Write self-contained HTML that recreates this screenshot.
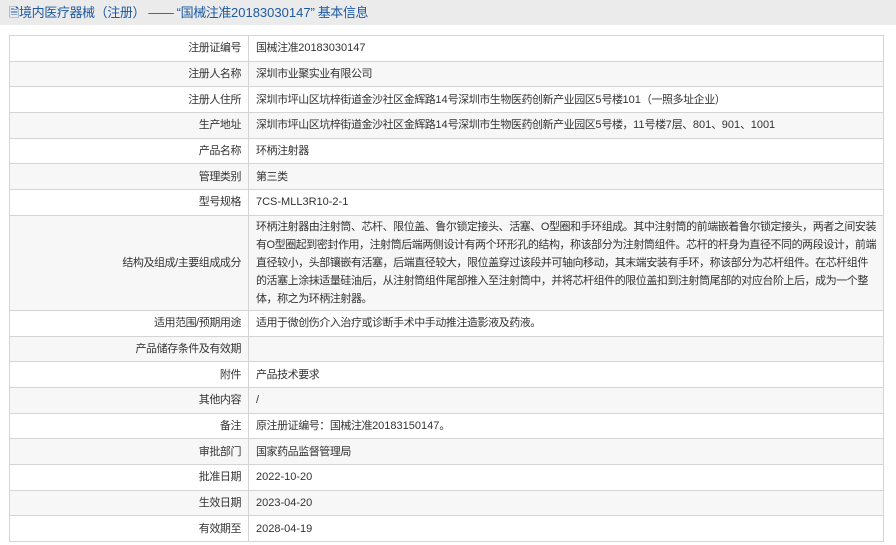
<!DOCTYPE html><html><head><meta charset="utf-8"><style>
body{margin:0;background:#fff;font-family:"Liberation Sans","Noto Sans CJK SC",sans-serif;width:896px;height:545px;overflow:hidden}
.hd{height:25px;background:#ebebeb;color:#1e5aa0;font-size:13px;line-height:25px;padding-left:9px;letter-spacing:-0.4px}
table{position:absolute;left:9px;top:35px;width:875px;border-collapse:collapse;font-size:11px;color:#333;letter-spacing:-0.45px}
td{border:1px solid #d4d4d4;height:24.7px;padding:0 7px;line-height:18px}
td.l{width:224px;text-align:right}
tr:nth-child(even) td{background:#f7f7f7}
i{font-style:normal;letter-spacing:0}
</style></head><body>
<div class="hd">🗎境内医疗器械（注册） —— “国械注准<i>20183030147</i>” 基本信息</div>
<table>
<tr><td class="l">注册证编号</td><td>国械注准<i>20183030147</i></td></tr>
<tr><td class="l">注册人名称</td><td>深圳市业聚实业有限公司</td></tr>
<tr><td class="l">注册人住所</td><td>深圳市坪山区坑梓街道金沙社区金辉路<i>14</i>号深圳市生物医药创新产业园区<i>5</i>号楼<i>101</i>（一照多址企业）</td></tr>
<tr><td class="l">生产地址</td><td>深圳市坪山区坑梓街道金沙社区金辉路<i>14</i>号深圳市生物医药创新产业园区<i>5</i>号楼，<i>11</i>号楼<i>7</i>层、<i>801</i>、<i>901</i>、<i>1001</i></td></tr>
<tr><td class="l">产品名称</td><td>环柄注射器</td></tr>
<tr><td class="l">管理类别</td><td>第三类</td></tr>
<tr><td class="l">型号规格</td><td><i>7CS-MLL3R10-2-1</i></td></tr>
<tr><td class="l" style="height:94px">结构及组成/主要组成成分</td><td>环柄注射器由注射筒、芯杆、限位盖、鲁尔锁定接头、活塞、O型圈和手环组成。其中注射筒的前端嵌着鲁尔锁定接头，两者之间安装有O型圈起到密封作用，注射筒后端两侧设计有两个环形孔的结构，称该部分为注射筒组件。芯杆的杆身为直径不同的两段设计，前端直径较小，头部镶嵌有活塞，后端直径较大，限位盖穿过该段并可轴向移动，其末端安装有手环，称该部分为芯杆组件。在芯杆组件的活塞上涂抹适量硅油后，从注射筒组件尾部推入至注射筒中，并将芯杆组件的限位盖扣到注射筒尾部的对应台阶上后，成为一个整体，称之为环柄注射器。</td></tr>
<tr><td class="l">适用范围/预期用途</td><td>适用于微创伤介入治疗或诊断手术中手动推注造影液及药液。</td></tr>
<tr><td class="l">产品储存条件及有效期</td><td></td></tr>
<tr><td class="l">附件</td><td>产品技术要求</td></tr>
<tr><td class="l">其他内容</td><td>/</td></tr>
<tr><td class="l">备注</td><td>原注册证编号：国械注准<i>20183150147</i>。</td></tr>
<tr><td class="l">审批部门</td><td>国家药品监督管理局</td></tr>
<tr><td class="l">批准日期</td><td><i>2022-10-20</i></td></tr>
<tr><td class="l">生效日期</td><td><i>2023-04-20</i></td></tr>
<tr><td class="l">有效期至</td><td><i>2028-04-19</i></td></tr>
</table>
</body></html>
